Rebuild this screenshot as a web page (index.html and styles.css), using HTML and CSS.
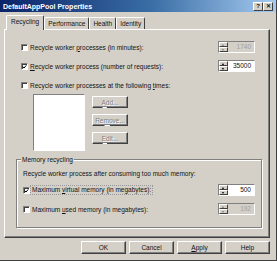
FILE: index.html
```html
<!DOCTYPE html>
<html lang="en">
<head>
    <meta charset="UTF-8">
    <title>DefaultAppPool Properties</title>
    <link rel="stylesheet" href="styles.css">
</head>
<body>
    <div class="dialog">
        <div class="titlebar">
            <span class="title">DefaultAppPool Properties</span>
            <span class="title-buttons">
                <span class="tbtn">?</span>
                <span class="tbtn">&#x2715;</span>
            </span>
        </div>

        <div class="tabs">
            <span class="tab selected">Recycling</span>
            <span class="tab">Performance</span>
            <span class="tab">Health</span>
            <span class="tab">Identity</span>
        </div>

        <div class="panel">
            <div class="row first">
                <span class="check"></span>
                <span class="label">Recycle worker <u>p</u>rocesses (in minutes):</span>
                <span class="spin disabled">
                    <span class="arrows"><span class="up"></span><span class="down"></span></span>
                    <span class="value">1740</span>
                </span>
            </div>
            <div class="row">
                <span class="check on"><svg viewBox="0 0 7 7"><path d="M1 3 L2.8 5 L6 1.2" /></svg></span>
                <span class="label"><u>R</u>ecycle worker process (number of requests):</span>
                <span class="spin">
                    <span class="arrows"><span class="up"></span><span class="down"></span></span>
                    <span class="value">35000</span>
                </span>
            </div>
            <div class="row">
                <span class="check"></span>
                <span class="label">Recycle worker processes at the following <u>t</u>imes:</span>
            </div>

            <div class="schedule">
                <div class="listbox"></div>
                <div class="side-buttons">
                    <span class="btn disabled"><u>A</u>dd...</span>
                    <span class="btn disabled">Re<u>m</u>ove...</span>
                    <span class="btn disabled"><u>E</u>dit...</span>
                </div>
            </div>

            <div class="group">
                <span class="legend">Memory recycling</span>
                <div class="group-text">Recycle worker process after consuming too much memory:</div>
                <div class="row mem-first">
                    <span class="check on"><svg viewBox="0 0 7 7"><path d="M1 3 L2.8 5 L6 1.2" /></svg></span>
                    <span class="label"><span class="focus">Maximum <u>v</u>irtual memory (in megabytes):</span></span>
                    <span class="spin">
                        <span class="arrows"><span class="up"></span><span class="down"></span></span>
                        <span class="value">500</span>
                    </span>
                </div>
                <div class="row">
                    <span class="check"></span>
                    <span class="label">Maximum <u>u</u>sed memory (in megabytes):</span>
                    <span class="spin disabled">
                        <span class="arrows"><span class="up"></span><span class="down"></span></span>
                        <span class="value">192</span>
                    </span>
                </div>
            </div>
        </div>

        <div class="footer">
            <span class="btn wide">OK</span>
            <span class="btn wide">Cancel</span>
            <span class="btn wide"><u>A</u>pply</span>
            <span class="btn wide">Help</span>
        </div>
    </div>
</body>
</html>
```

FILE: styles.css
```css
body {
    margin: 0;
    font-family: "Liberation Sans", Arial, sans-serif;
    font-size: 6.5px;
    color: #111;
}

.dialog {
    width: 277px;
    height: 261px;
    box-sizing: border-box;
    background-color: #d4d0c8;
    border-right: 1px solid #404040;
    border-bottom: 1px solid #404040;
    overflow: hidden;
}

.titlebar {
    height: 12px;
    display: flex;
    align-items: center;
    justify-content: space-between;
    padding: 0 3px 0 3px;
    background: linear-gradient(to right, #0a246a, #3a6ea5 55%, #a6caf0);
}

.title {
    color: #fff;
    font-weight: bold;
    font-size: 7px;
}

.title-buttons {
    display: flex;
}

.tbtn {
    width: 10px;
    height: 9px;
    box-sizing: border-box;
    background: #d4d0c8;
    border: 1px solid;
    border-color: #fff #404040 #404040 #fff;
    font-size: 6px;
    font-weight: bold;
    line-height: 7px;
    text-align: center;
}

/* tabs */
.tabs {
    display: flex;
    align-items: flex-end;
    height: 17px;
    padding-left: 6px;
}

.tab {
    height: 12px;
    box-sizing: border-box;
    padding: 0 3px;
    border: 1px solid;
    border-color: #fff #404040 transparent #fff;
    border-bottom: none;
    border-radius: 2px 2px 0 0;
    line-height: 11px;
}

.tab.selected {
    height: 15px;
    padding: 0 4px;
    line-height: 12px;
    position: relative;
    margin-bottom: -1px;
    background: #d4d0c8;
    z-index: 1;
}

/* main panel */
.panel {
    margin-left: 4px;
    width: 266px;
    height: 209px;
    box-sizing: border-box;
    border: 1px solid;
    border-color: #fff #404040 #404040 #fff;
    box-shadow: inset -1px -1px 0 #808080;
    padding: 11px 14px 0 16px;
}

.row {
    display: flex;
    align-items: center;
    height: 12px;
    margin-top: 7px;
}

.row.first {
    margin-top: 0;
}

.label {
    flex: 1;
    margin-left: 2px;
}

.focus {
    display: inline-block;
    line-height: 8px;
    border: 1px dotted #999;
    padding: 0 1px;
    margin-left: -2px;
}

.check {
    width: 7px;
    height: 7px;
    box-sizing: border-box;
    background: #fff;
    border: 1px solid;
    border-color: #808080 #fff #fff #808080;
    box-shadow: inset 1px 1px 0 #404040;
    display: flex;
}

.check svg {
    width: 6px;
    height: 6px;
    fill: none;
    stroke: #000;
    stroke-width: 1.4;
}

.spin {
    width: 37px;
    height: 12px;
    box-sizing: border-box;
    display: flex;
    background: #fff;
    border: 1px solid;
    border-color: #808080 #fff #fff #808080;
}

.spin .arrows {
    width: 9px;
    display: flex;
    flex-direction: column;
}

.spin .up,
.spin .down {
    flex: 1;
    background: #d4d0c8;
    border: 1px solid;
    border-color: #fff #404040 #404040 #fff;
    position: relative;
}

.spin .up::after,
.spin .down::after {
    content: "";
    position: absolute;
    left: 2px;
    top: 1px;
    border-left: 1.5px solid transparent;
    border-right: 1.5px solid transparent;
}

.spin .up::after {
    border-bottom: 2px solid #000;
}

.spin .down::after {
    border-top: 2px solid #000;
}

.spin .value {
    flex: 1;
    text-align: right;
    padding-right: 3px;
    line-height: 10px;
}

.spin.disabled {
    background: #d4d0c8;
    color: #a0a0a0;
}

.spin.disabled .up::after {
    border-bottom-color: #808080;
}

.spin.disabled .down::after {
    border-top-color: #808080;
}

/* schedule list */
.schedule {
    display: flex;
    margin: 3px 0 0 12px;
    height: 57px;
}

.listbox {
    width: 52px;
    height: 57px;
    box-sizing: border-box;
    background: #fff;
    border: 1px solid;
    border-color: #808080 #fff #fff #808080;
}

.side-buttons {
    margin-left: 7px;
    padding-top: 2px;
    display: flex;
    flex-direction: column;
    gap: 6px;
}

.btn {
    width: 36px;
    height: 12px;
    box-sizing: border-box;
    display: flex;
    align-items: center;
    justify-content: center;
    background: #d4d0c8;
    border: 1px solid;
    border-color: #fff #404040 #404040 #fff;
    box-shadow: inset -1px -1px 0 #808080;
}

.btn.disabled {
    color: #808080;
    text-shadow: 1px 1px 0 #fff;
}

/* memory group */
.group {
    position: relative;
    margin: 8px -7px 0 -5px;
    height: 69px;
    box-sizing: border-box;
    border: 1px solid #808080;
    box-shadow: 1px 1px 0 #fff, inset 1px 1px 0 #fff;
    padding: 9px 6px 0 6px;
}

.legend {
    position: absolute;
    top: -4px;
    left: 4px;
    padding: 0 1px;
    background: #d4d0c8;
    line-height: 7px;
}

.group-text {
    line-height: 10px;
}

.row.mem-first {
    margin-top: 5px;
}

/* footer */
.footer {
    display: flex;
    justify-content: flex-end;
    gap: 3px;
    padding: 3px 6px 0 0;
}

.btn.wide {
    width: 45px;
    height: 13px;
}
```
